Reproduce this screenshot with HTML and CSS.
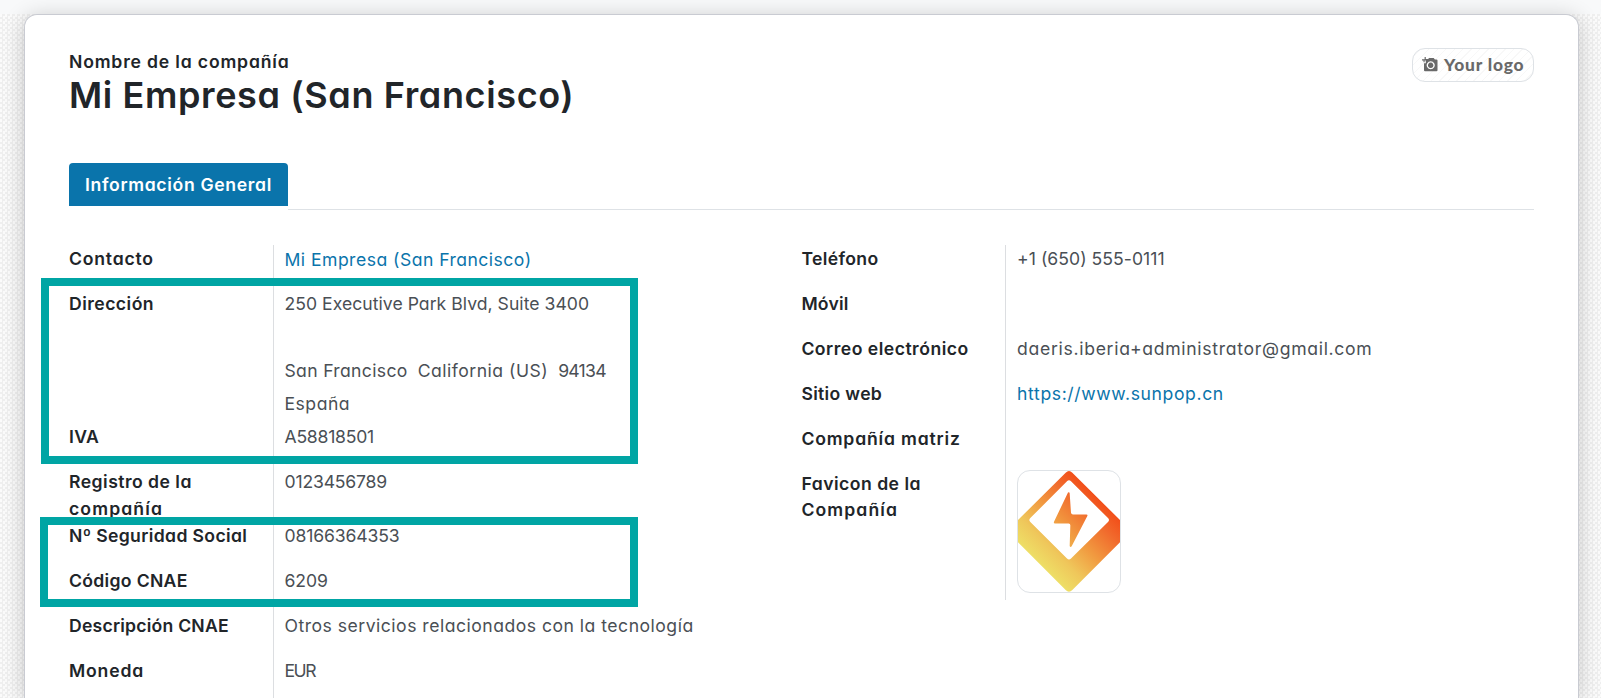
FILE: index.html
```
<!DOCTYPE html>
<html lang="es">
<head>
<meta charset="utf-8">
<title>Mi Empresa (San Francisco)</title>
<link rel="stylesheet" href="styles.css">
</head>
<body>
<main class="sheet">
  <header class="header">
    <div class="title">
      <div class="label ls-117">Nombre de la compañía</div>
      <h1 class="name">Mi Empresa (San Francisco)</h1>
    </div>
    <div class="logo">
      <svg class="camera" viewBox="0 0 16 15" width="16" height="15">
        <path fill="#696969" fill-rule="evenodd" d="M2.6 0h1.2v2h2.3l1-1h4.6l1.2 1.5h1.6q1 0 1 1v9.700q0 1-1 1H3q-1 0-1-1V6.200h1.800V3.400H2.600V5.200H1.500V3.400H0V2.200h2.600zM8.700 4.300a4 4 0 1 0 .01 0zM8.700 5.600a2.700 2.700 0 1 1-.01 0z"/>
        <circle cx="8.700" cy="8.300" r="1.300" fill="#696969"/>
      </svg>
      <span>Your logo</span>
    </div>
  </header>

  <nav class="tabs">
    <div class="tab">Información General</div>
    <div class="tabs-line"></div>
  </nav>

  <div class="groups">
    <section class="group">
      <div class="row"><div class="label ls-110">Contacto</div><div class="value link contact">Mi Empresa (San Francisco)</div></div>
      <div class="row address">
        <div class="label ls-70">Dirección</div>
        <div class="value">
          <div class="ls-33">250 Executive Park Blvd, Suite 3400</div>
          <div class="line-gap"></div>
          <div class="city"><span class="ls-61">San Francisco</span><span class="ls-78">California (US)</span><span class="ls-n32">94134</span></div>
          <div class="country ls-85">España</div>
        </div>
      </div>
      <div class="row"><div class="label ls-61">IVA</div><div class="value ls-06">A58818501</div></div>
      <div class="row tall"><div class="label"><span class="ls-75">Registro de la</span><br><span class="ls-150">compañía</span></div><div class="value ls-12">0123456789</div></div>
      <div class="row"><div class="label ls-66">Nº Seguridad Social</div><div class="value ls-17">08166364353</div></div>
      <div class="row"><div class="label ls-61">Código CNAE</div><div class="value ls-21">6209</div></div>
      <div class="row"><div class="label ls-50">Descripción CNAE</div><div class="value ls-78">Otros servicios relacionados con la tecnología</div></div>
      <div class="row last"><div class="label ls-117">Moneda</div><div class="value ls-n94">EUR</div></div>
      <div class="mark mark-address"></div>
      <div class="mark mark-codes"></div>
    </section>

    <section class="group">
      <div class="row"><div class="label ls-66">Teléfono</div><div class="value ls-33">+1 (650) 555-0111</div></div>
      <div class="row"><div class="label ls-50">Móvil</div><div class="value"></div></div>
      <div class="row"><div class="label ls-77">Correo electrónico</div><div class="value ls-100">daeris.iberia+administrator@gmail.com</div></div>
      <div class="row"><div class="label ls-61">Sitio web</div><div class="value link ls-89">https://www.sunpop.cn</div></div>
      <div class="row"><div class="label ls-117">Compañía matriz</div><div class="value"></div></div>
      <div class="row favicon-row">
        <div class="label tight"><span class="ls-77">Favicon de la</span><br><span class="ls-150">Compañía</span></div>
        <div class="value">
          <div class="favicon">
            <svg viewBox="54 47 306 365" width="102" height="121" preserveAspectRatio="none">
              <defs>
                <linearGradient id="flame" gradientUnits="userSpaceOnUse" x1="110" y1="320" x2="300" y2="130">
                  <stop offset="0" stop-color="#eedf66"/>
                  <stop offset=".22" stop-color="#efc75b"/>
                  <stop offset=".5" stop-color="#f19a40"/>
                  <stop offset=".8" stop-color="#f1692c"/>
                  <stop offset="1" stop-color="#f24d18"/>
                </linearGradient>
              </defs>
              <path fill="url(#flame)" d="M197 52Q207 42 217 52L372 207V250L217 406Q207 416 197 406L42 250V207Z"/>
              <path fill="#fff" d="M201 78Q207 72 213 78L324 189Q330 195 324 201L213 311Q207 317 201 311L91 201Q85 195 91 189Z"/>
              <path fill="url(#flame)" d="M204 112Q208 109 209 114L213 173Q214 178 219 178H259Q264 178 262 183L215 274Q211 279 209 273L211 211Q211 205 206 205H165Q160 205 162 200Z"/>
            </svg>
          </div>
        </div>
      </div>
    </section>
  </div>
</main>
</body>
</html>
```
FILE: styles.css
```
* { box-sizing: border-box; }
body {
  margin: 0;
  height: 698px;
  padding: 14px 22px 0 24px;
  overflow: hidden;
  font: 400 17.6px/27px Inter, "Noto Sans", sans-serif;
  font-feature-settings: "cv11";
  color: #4a4f55;
  background:
    linear-gradient(#f8f9fa, #f8f9fa) 0 0 / 100% 14px no-repeat,
    repeating-conic-gradient(#efefef 0 25%, #fbfbfb 0 50%) 0 14px / 5px 5px;
}
.sheet {
  height: 684px;
  padding: 33px 44px 0;
  background: #fff;
  border: 1px solid #c9cbd2;
  border-bottom: 0;
  border-radius: 13px 13px 0 0;
  box-shadow: 0 3px 22px rgba(0, 0, 0, .2);
}
.header { display: flex; justify-content: space-between; height: 115px; }
.label { color: #212529; font-weight: 600; white-space: nowrap; }
.name {
  margin: 0;
  font-size: 36px;
  line-height: 40px;
  font-weight: 600;
  letter-spacing: .62px;
  color: #212529;
}
.logo {
  display: flex;
  align-items: center;
  gap: 6px;
  width: 122px;
  height: 34px;
  padding-left: 9px;
  border: 1px solid #dee2e6;
  border-radius: 13px;
  background: repeating-linear-gradient(135deg, #fff 0 5px, #f8f8f8 5px 6px);
  font: 900 17.4px/32px Lato, sans-serif;
  letter-spacing: .8px;
  color: #696969;
  white-space: nowrap;
}
.camera { flex: none; margin-top: -1px; }
.tabs { display: flex; height: 47px; }
.tab {
  width: 219px;
  height: 43px;
  border-radius: 4px 4px 0 0;
  background: #0a74ab;
  color: #fff;
  font-weight: 600;
  line-height: 44px;
  padding-left: 16px;
  letter-spacing: .66px;
  white-space: nowrap;
}
.tabs-line { flex: 1; border-bottom: 1px solid #dee2e6; }
.groups { display: flex; align-items: flex-start; margin-top: 35px; }
.group { position: relative; width: 732.4px; flex: none; }
.row { display: flex; height: 45px; line-height: 28px; }
.row .label { width: 204px; flex: none; }
.row .value {
  flex: 1;
  padding-left: 10.5px;
  border-left: 1px solid #dcdee1;
  white-space: nowrap;
}
.group + .group .label { width: 203.5px; }
.group + .group .value { padding-left: 11.2px; }
.row .contact { padding-top: 1px; letter-spacing: .46px; }
.link { color: #0a74ab; }
.address { height: 133px; }
.address .line-gap { height: 39px; }
.city { display: flex; gap: 10px; }
.country { margin-top: 5px; }
.tall { height: 54px; }
.tall .label { line-height: 27px; }
.last { height: 41px; }
.favicon-row { height: 130px; }
.row .tight { line-height: 26px; padding-top: 1px; }
.favicon {
  width: 104px;
  height: 123px;
  border: 1px solid #dee2e6;
  border-radius: 13px;
  overflow: hidden;
}
.favicon svg { display: block; }

/* highlight frames laid over the form */
.mark { position: absolute; border: 8px solid #00a5a4; }
.mark-address { left: -28px; top: 33px; width: 597px; height: 186px; }
.mark-codes { left: -29px; top: 272px; width: 598px; height: 90px; }

/* tracking steps */
.ls-n94 { letter-spacing: -1.5px; }
.ls-n32 { letter-spacing: -.75px; }
.ls-06 { letter-spacing: -.24px; }
.ls-12 { letter-spacing: -.18px; }
.ls-17 { letter-spacing: -.13px; }
.ls-21 { letter-spacing: -.1px; }
.ls-33 { letter-spacing: .03px; }
.ls-50 { letter-spacing: .22px; }
.ls-61 { letter-spacing: .32px; }
.ls-66 { letter-spacing: .36px; }
.ls-70 { letter-spacing: .46px; }
.ls-75 { letter-spacing: .47px; }
.ls-77 { letter-spacing: .49px; }
.ls-78 { letter-spacing: .49px; }
.ls-85 { letter-spacing: .5px; }
.ls-89 { letter-spacing: .61px; }
.ls-100 { letter-spacing: .69px; }
.ls-110 { letter-spacing: .8px; }
.ls-117 { letter-spacing: .82px; }
.ls-150 { letter-spacing: 1.12px; }
```
